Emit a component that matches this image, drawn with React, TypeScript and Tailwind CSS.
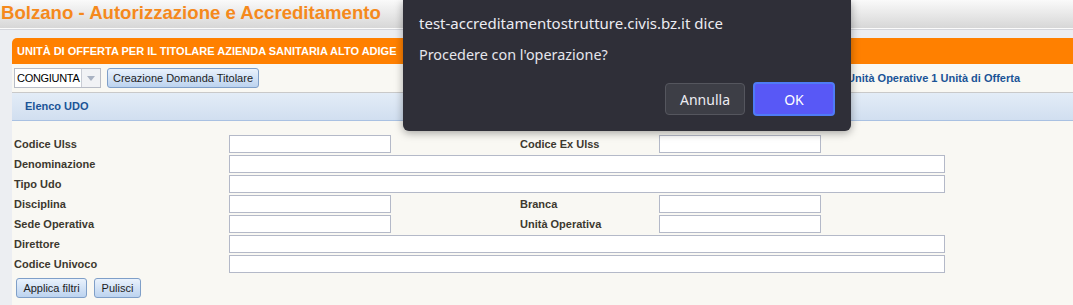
import React from "react";

const Field = ({ w = "short" }: { w?: "short" | "long" }) => (
  <div
    className={`h-[18px] bg-white border border-[#b4b9c8] ${w === "long" ? "w-[716px]" : "w-[162px]"}`}
  />
);

const Label = ({ children }: { children: React.ReactNode }) => (
  <span className="text-[11px] font-bold text-[#3d392f] leading-[20px]">{children}</span>
);

const BlueButton = ({ children, className = "" }: { children: React.ReactNode; className?: string }) => (
  <button
    className={`h-[20px] rounded-[3px] border border-[#7f9fc8] bg-gradient-to-b from-[#eaf2fc] to-[#bcd3ef] text-[11px] text-[#1d1d1d] leading-[18px] whitespace-nowrap ${className}`}
  >
    {children}
  </button>
);

export default function App() {
  return (
    <div className="relative w-[1073px] h-[305px] overflow-hidden bg-[#eceef2] font-['Liberation_Sans',Arial,sans-serif]">
      {/* Header */}
      <div className="h-[28px] bg-gradient-to-b from-[#fafafa] to-[#d7d7d7] pl-[1px]">
        <span className="text-[18.6px] font-bold text-[#f5891c] leading-[26px] whitespace-nowrap">
          Bolzano - Autorizzazione e Accreditamento
        </span>
      </div>
      <div className="h-[1px] bg-[#fbfbfb]" />
      <div className="h-[1px] bg-[#d4d6dc]" />

      <div className="pl-[12px] pt-[8px]">
        <div className="bg-[#f9f8f3] rounded-tl-[5px] overflow-hidden">
          {/* Orange title bar */}
          <div className="h-[26px] bg-[#ff8000] pl-[5px] flex items-center">
            <span className="text-[11px] font-bold text-white">
              UNITÀ DI OFFERTA PER IL TITOLARE AZIENDA SANITARIA ALTO ADIGE
            </span>
          </div>

          {/* Toolbar */}
          <div className="h-[29px] flex items-center pl-[2px] border-b border-[#c9c9c9]">
            <div className="flex h-[20px] w-[87px] border border-[#b8bcc6] bg-white">
              <span className="flex-1 whitespace-nowrap text-[11px] tracking-[-0.3px] leading-[18px] text-black pl-[2px]">
                CONGIUNTA
              </span>
              <span className="w-[19px] shrink-0 border-l border-[#c9ccd4] bg-[#f1f2f5] flex items-center justify-center">
                <svg width="8" height="5" viewBox="0 0 8 5">
                  <path d="M0 0 L8 0 L4 5 Z" fill="#a9b2c2" />
                </svg>
              </span>
            </div>
            <BlueButton className="ml-[6px] w-[152px]">Creazione Domanda Titolare</BlueButton>
            <span className="ml-auto pr-[53px] text-[11px] font-bold text-[#1b5497]">
              Unità Operative 1 Unità di Offerta
            </span>
          </div>

          {/* Elenco UDO */}
          <div className="h-[28px] bg-gradient-to-b from-[#e3ecf7] to-[#d1dff0] border-b border-[#a9c1e2] pl-[13px] flex items-center">
            <span className="text-[11px] font-bold text-[#1b5497]">Elenco UDO</span>
          </div>

          {/* Filter form */}
          <div className="pt-[13px] pl-[2px] pb-[7px]">
            <div className="grid grid-cols-[215px_162px_129px_139px_162px] auto-rows-[20px] items-center">
              <Label>Codice Ulss</Label>
              <Field />
              <span />
              <Label>Codice Ex Ulss</Label>
              <Field />

              <Label>Denominazione</Label>
              <div className="col-span-4"><Field w="long" /></div>

              <Label>Tipo Udo</Label>
              <div className="col-span-4"><Field w="long" /></div>

              <Label>Disciplina</Label>
              <Field />
              <span />
              <Label>Branca</Label>
              <Field />

              <Label>Sede Operativa</Label>
              <Field />
              <span />
              <Label>Unità Operativa</Label>
              <Field />

              <Label>Direttore</Label>
              <div className="col-span-4"><Field w="long" /></div>

              <Label>Codice Univoco</Label>
              <div className="col-span-4"><Field w="long" /></div>
            </div>
            <div className="flex gap-[7px] pl-[2px] mt-[4px]">
              <BlueButton className="w-[71px]">Applica filtri</BlueButton>
              <BlueButton className="w-[47px]">Pulisci</BlueButton>
            </div>
          </div>
        </div>
      </div>

      {/* Confirm dialog */}
      <div className="absolute left-[403px] top-0 w-[448px] h-[131px] rounded-b-[6px] bg-[#2f2f38] shadow-[0_2px_8px_rgba(0,0,0,0.35)] px-[16px] font-['Noto_Sans',sans-serif]">
        <div className="pt-[11px] text-[15px] leading-[24px] text-[#ececf2] whitespace-nowrap">
          test-accreditamentostrutture.civis.bz.it dice
        </div>
        <div className="mt-[10px] text-[14.4px] leading-[20px] text-[#e6e6ec]">Procedere con l'operazione?</div>
        <div className="flex justify-end gap-[8px] mt-[18px]">
          <button className="w-[80px] h-[32px] rounded-[4px] border border-[#55565e] bg-[#3d3e46] text-[14px] text-[#ececf2]">
            Annulla
          </button>
          <button className="w-[82px] h-[34px] -mt-[1px] rounded-[4px] border-2 border-[#4f7bf6] bg-[#5858f6] text-[14px] text-white">
            OK
          </button>
        </div>
      </div>
    </div>
  );
}
